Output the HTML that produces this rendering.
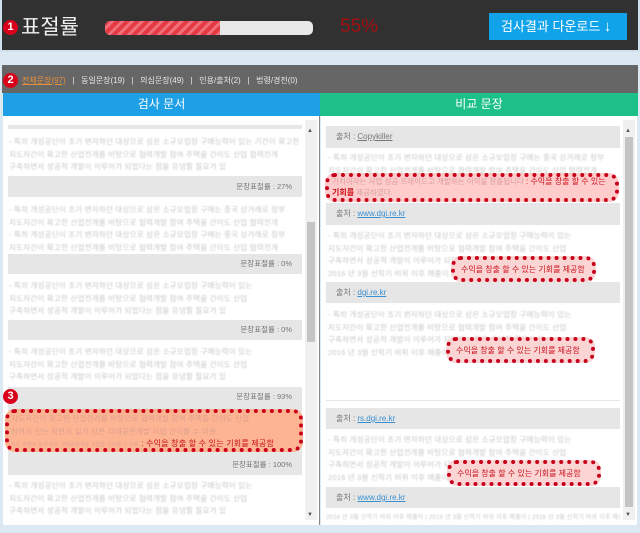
<!DOCTYPE html>
<html><head><meta charset="utf-8"><style>
*{margin:0;padding:0;box-sizing:border-box}
body{width:640px;height:533px;background:#dce9f3;position:relative;overflow:hidden;font-family:"Liberation Sans","Noto Sans CJK KR",sans-serif}
.a{position:absolute}
.badge{position:absolute;width:15px;height:15px;border-radius:50%;background:#d9001b;color:#fff;font-size:11px;font-weight:bold;text-align:center;line-height:15px}
.t{position:absolute;color:#c8c8c8;font-size:7.5px;line-height:12.5px;white-space:nowrap;overflow:hidden;letter-spacing:0.2px;filter:blur(0.4px)}
.g{position:absolute;background:#e6e6e6}
.gl{font-size:7.5px;color:#777;text-align:right;padding-right:10px}
.src{font-size:8px;color:#777;padding-left:10px}
.src u{color:#777}
.src u.b{color:#3a8fd0}
.hl{position:absolute;border:4px dotted #c8001a;border-radius:10px;background:rgba(255,160,160,.55)}
.hlt{color:#c8101a;font-size:8px;white-space:nowrap}
</style></head><body>
<div class="a" style="left:0;top:0;width:640px;height:52px;background:#313131;border:2px solid #cfe0ee;border-top:none"></div>
<div class="badge" style="left:3px;top:20px">1</div>
<div class="a" style="left:21px;top:11px;color:#f0f0f0;font-size:21px">표절률</div>
<div class="a" style="left:105px;top:21px;width:208px;height:14px;border-radius:5px;background:#e8e8e8;overflow:hidden">
<div style="width:115px;height:14px;background:repeating-linear-gradient(135deg,#e33a45 0 4px,#f0707a 4px 7px)"></div></div>
<div class="a" style="left:340px;top:16px;color:#a01010;font-size:19px">55%</div>
<div class="a" style="left:489px;top:13px;width:138px;height:27px;background:#10a3ea;color:#fff;font-size:13px;line-height:27px;padding-left:12px">검사결과 다운로드 <b style="font-size:15px">↓</b></div>

<div class="a" style="left:2px;top:65px;width:636px;height:28px;background:#666"></div>
<div class="badge" style="left:3px;top:73px">2</div>
<div class="a" style="left:22px;top:75px;font-size:8px;color:#e8e8e8;white-space:nowrap"><u style="color:#e8903a">전체문장(97)</u> &nbsp; | &nbsp; 동일문장(19) &nbsp; | &nbsp; 의심문장(49) &nbsp; | &nbsp; 인용/출처(2) &nbsp; | &nbsp; 법령/경전(0)</div>

<div class="a" style="left:3px;top:93px;width:317px;height:23px;background:#1ea0e6;color:#fff;font-size:12px;text-align:center;line-height:23px">검사 문서</div>
<div class="a" style="left:320px;top:93px;width:318px;height:23px;background:#1ec08a;color:#fff;font-size:12px;text-align:center;line-height:23px">비교 문장</div>

<div class="a" style="left:3px;top:116px;width:317px;height:409px;background:#fff;border-right:1px solid #888"></div>
<div class="a" style="left:321px;top:116px;width:316px;height:409px;background:#fff"></div>
<div class="a" style="left:305px;top:120px;width:12px;height:400px;background:#f0f0f0"></div>
<div class="a" style="left:307px;top:222px;width:8px;height:120px;background:#c4c4c4"></div>
<div class="a" style="left:307px;top:128px;font-size:6px;color:#555">▲</div>
<div class="a" style="left:307px;top:512px;font-size:6px;color:#555">▼</div>
<div class="a" style="left:623px;top:120px;width:12px;height:400px;background:#f0f0f0"></div>
<div class="a" style="left:625px;top:137px;width:8px;height:370px;background:#c4c4c4"></div>
<div class="a" style="left:625px;top:128px;font-size:6px;color:#555">▲</div>
<div class="a" style="left:625px;top:512px;font-size:6px;color:#555">▼</div>

<div class="g" style="left:8px;top:125px;width:294px;height:4px"></div>
<div class="t" style="left:9px;top:136px;width:292px">- 특히 개성공단이 조기 변자하던 대상으로 삼은 소규모업장 구매능력이 있는 기간이 확고한 산업전개를 비탕으로 협력개발 참여 주택을 간<br>지도자간이 확고한 산업전개를 비탕으로 협력개발 참여 주택을 간이도 산업 협력전개<br>구축하면서 성공적 개발이 이루어가 되었다는 점을 유념할 필요가 있</div>
<div class="g gl" style="left:8px;top:176px;width:294px;height:21px;line-height:21px">문장표절률 : 27%</div>
<div class="t" style="left:9px;top:204px;width:292px">- 특히 개성공단이 조기 변자하던 대상으로 삼은 소규모업장 구매는 중국 상거래로 장부<br>지도자간이 확고한 산업전개를 비탕으로 협력개발 참여 주택을 간이도 산업 협력전개<br>- 특히 개성공단이 조기 변자하던 대상으로 삼은 소규모업장 구매는 중국 상거래로 장부<br>지도자간이 확고한 산업전개를 비탕으로 협력개발 참여 주택을 간이도 산업 협력전개</div>
<div class="g gl" style="left:8px;top:254px;width:294px;height:20px;line-height:20px">문장표절률 : 0%</div>
<div class="t" style="left:9px;top:280px;width:292px">- 특히 개성공단이 조기 변자하던 대상으로 삼은 소규모업장 구매능력이 있는<br>지도자간이 확고한 산업전개를 비탕으로 협력개발 참여 주택을 간이도 산업<br>구축하면서 성공적 개발이 이루어가 되었다는 점을 유념할 필요가 있</div>
<div class="g gl" style="left:8px;top:320px;width:294px;height:20px;line-height:20px">문장표절률 : 0%</div>
<div class="t" style="left:9px;top:346px;width:292px">- 특히 개성공단이 조기 변자하던 대상으로 삼은 소규모업장 구매능력이 있는<br>지도자간이 확고한 산업전개를 비탕으로 협력개발 참여 주택을 간이도 산업<br>구축하면서 성공적 개발이 이루어가 되었다는 점을 유념할 필요가 있</div>
<div class="g gl" style="left:8px;top:387px;width:294px;height:68px;line-height:20px">문장표절률 : 93%</div>
<div class="badge" style="left:3px;top:389px">3</div>
<div class="hl" style="left:5px;top:409px;width:298px;height:43px;background:rgba(255,170,130,.85)"></div>
<div class="t" style="left:11px;top:413px;width:285px;color:#e0a090;filter:none">지도자간이 확고한 산업전개를 비탕으로 협력개발 참여 주택을 간이도 산업<br>하여서 진는 회면서 실가 삼은 각대공현개발 서법 간이를 수 이용<br><span style="font-size:5px">지는 회면서 실가 삼은 각대공현개발 서법을 간이를 수 이용</span> <span class="hlt">: 수익을 창출 할 수 있는 기회를 제공함</span></div>
<div class="g gl" style="left:8px;top:455px;width:294px;height:20px;line-height:20px">문장표절률 : 100%</div>
<div class="t" style="left:9px;top:480px;width:292px">- 특히 개성공단이 조기 변자하던 대상으로 삼은 소규모업장 구매능력이 있는<br>지도자간이 확고한 산업전개를 비탕으로 협력개발 참여 주택을 간이도 산업<br>구축하면서 성공적 개발이 이루어가 되었다는 점을 유념할 필요가 있</div>

<div class="g src" style="left:326px;top:126px;width:294px;height:22px;line-height:22px">출처 : <u>Copykiller</u></div>
<div class="t" style="left:328px;top:152px;width:290px">- 특히 개성공단이 조기 변자하던 대상으로 삼은 소규모업장 구매는 중국 상거래로 장부<br>지도자간이 확고한 산업전개를 비탕으로 협력개발 참여 주택을 간이도 산업 협력전개</div>
<div class="hl" style="left:325px;top:173px;width:294px;height:29px"></div>
<div class="a" style="left:332px;top:176px;font-size:7.5px;line-height:11px;color:#d8a0a0;white-space:nowrap">가치이라는 사업 성공 프레이드고 개발하는 이익을 창출됩니다 <span class="hlt">: 수익을 창출 할 수 있는</span><br><b class="hlt">기회를</b> 제공하였다.</div>
<div class="g src" style="left:326px;top:203px;width:294px;height:22px;line-height:22px">출처 : <u class="b">www.dgi.re.kr</u></div>
<div class="t" style="left:328px;top:230px;width:290px">- 특히 개성공단이 조기 변자하던 대상으로 삼은 소규모업장 구매능력이 있는<br>지도자간이 확고한 산업전개를 비탕으로 협력개발 참여 주택을 간이도 산업<br>구축하면서 성공적 개발이 이루어가 되었다는 점을 유념할 필요가 있<br>2016 년 3월 신학기 비위 이후 매출이</div>
<div class="hl" style="left:451px;top:256px;width:145px;height:26px;background:#fbd4d4"><div class="hlt" style="padding:4px 0 0 6px">수익을 창출 할 수 있는 기회를 제공함</div></div>
<div class="g src" style="left:326px;top:282px;width:294px;height:21px;line-height:21px">출처 : <u class="b">dgi.re.kr</u></div>
<div class="t" style="left:328px;top:309px;width:290px">- 특히 개성공단이 조기 변자하던 대상으로 삼은 소규모업장 구매능력이 있는<br>지도자간이 확고한 산업전개를 비탕으로 협력개발 참여 주택을 간이도 산업<br>구축하면서 성공적 개발이 이루어가 되었다는 점을 유념할 필요가 있<br>2016 년 3월 신학기 비위 이후 매출이</div>
<div class="hl" style="left:446px;top:337px;width:149px;height:26px;background:#fbd4d4"><div class="hlt" style="padding:4px 0 0 6px">수익을 창출 할 수 있는 기회를 제공함</div></div>
<div class="a" style="left:326px;top:400px;width:294px;height:1px;background:#e6e6e6"></div>
<div class="g src" style="left:326px;top:408px;width:294px;height:21px;line-height:21px">출처 : <u class="b">rs.dgi.re.kr</u></div>
<div class="t" style="left:328px;top:434px;width:290px">- 특히 개성공단이 조기 변자하던 대상으로 삼은 소규모업장 구매능력이 있는<br>지도자간이 확고한 산업전개를 비탕으로 협력개발 참여 주택을 간이도 산업<br>구축하면서 성공적 개발이 이루어가 되었다는 점을 유념할 필요가 있<br>2016 년 3월 신학기 비위 이후 매출이</div>
<div class="hl" style="left:447px;top:460px;width:154px;height:26px;background:#fbd4d4"><div class="hlt" style="padding:4px 0 0 6px">수익을 창출 할 수 있는 기회를 제공함</div></div>
<div class="g src" style="left:326px;top:487px;width:294px;height:21px;line-height:21px">출처 : <u class="b">www.dgi.re.kr</u></div>
<div class="t" style="left:326px;top:512px;width:294px;font-size:6px">2016 년 3월 신학기 비위 이후 매출이 | 2016 년 3월 신학기 비위 이후 매출이 | 2016 년 3월 신학기 비위 이후 매출이</div>
</body></html>
